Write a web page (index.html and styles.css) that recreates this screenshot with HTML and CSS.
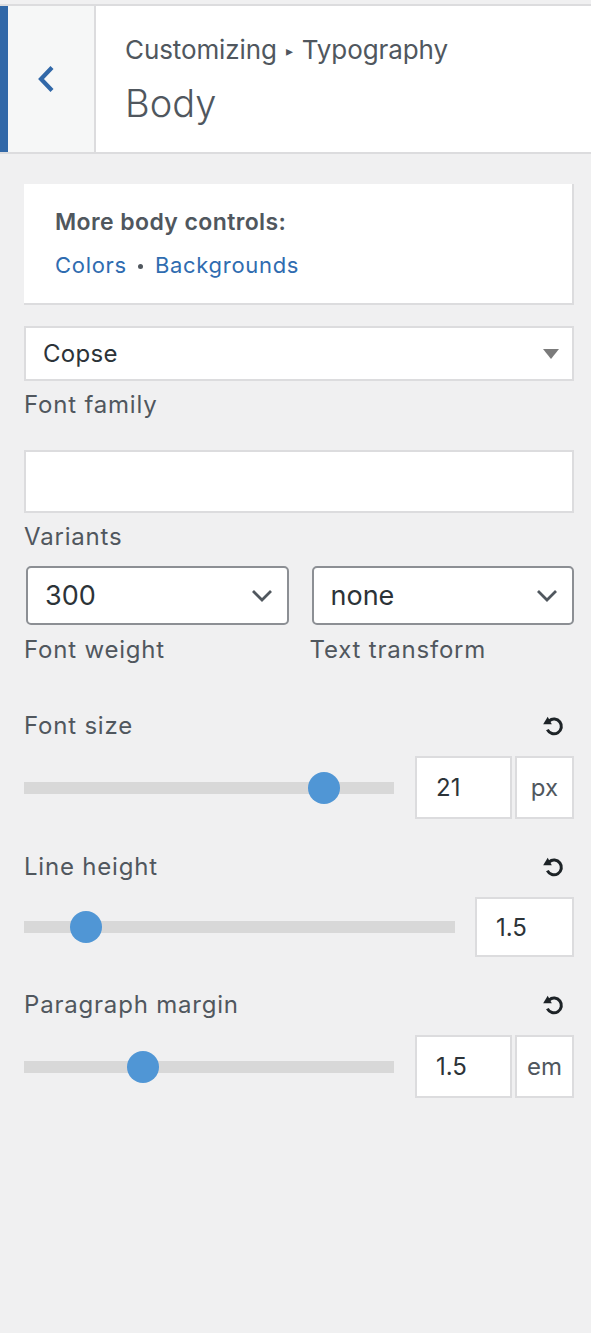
FILE: index.html
```html
<!DOCTYPE html>
<html lang="en">
<head>
<meta charset="utf-8">
<title>Customizing Typography – Body</title>
<link rel="stylesheet" href="styles.css">
</head>
<body>
<header class="hdr">
  <div class="back">
    <svg class="back-icon" width="20" height="28" viewBox="0 0 20 28"><path d="M16 2.5 L5 14 L16 25.5" fill="none" stroke="#3168a8" stroke-width="4.2"/></svg>
  </div>
  <div class="title">
    <div class="crumb">Customizing<span class="sep">▸</span>Typography</div>
    <h1 class="name">Body</h1>
  </div>
</header>

<main class="panel">
  <section class="card">
    <p class="card-title">More body controls:</p>
    <p class="card-links"><a href="#">Colors</a><span class="dot"></span><a href="#">Backgrounds</a></p>
  </section>

  <div class="sel-wide">
    <span>Copse</span>
    <svg width="16" height="10" viewBox="0 0 16 10"><path d="M0 0 H16 L8 10 Z" fill="#7b7b7b"/></svg>
  </div>
  <span class="lbl">Font family</span>

  <div class="text-input"></div>
  <span class="lbl">Variants</span>

  <div class="pair">
    <div class="col">
      <div class="sel"><span>300</span><svg width="22" height="14" viewBox="0 0 22 14"><path d="M2 2 L11 11 L20 2" fill="none" stroke="#50575e" stroke-width="2.8"/></svg></div>
      <span class="lbl">Font weight</span>
    </div>
    <div class="col">
      <div class="sel"><span>none</span><svg width="22" height="14" viewBox="0 0 22 14"><path d="M2 2 L11 11 L20 2" fill="none" stroke="#50575e" stroke-width="2.8"/></svg></div>
      <span class="lbl">Text transform</span>
    </div>
  </div>

  <div class="slider-block first">
    <div class="head"><span>Font size</span>
      <svg class="reset" width="26" height="26" viewBox="0 0 24 24"><path d="M7.4 7.4 A6.8 6.8 0 1 1 5.9 15.4" fill="none" stroke="#1d2327" stroke-width="2.8"/><path d="M6.2 3.4 L2 10.4 L10 10.4 Z" fill="#1d2327"/></svg>
    </div>
    <div class="slider-row">
      <div class="track"><span class="thumb" style="left:81%"></span></div>
      <div class="num-group">
        <div class="num">21</div>
        <div class="unit">px</div>
      </div>
    </div>
  </div>

  <div class="slider-block">
    <div class="head"><span>Line height</span>
      <svg class="reset" width="26" height="26" viewBox="0 0 24 24"><path d="M7.4 7.4 A6.8 6.8 0 1 1 5.9 15.4" fill="none" stroke="#1d2327" stroke-width="2.8"/><path d="M6.2 3.4 L2 10.4 L10 10.4 Z" fill="#1d2327"/></svg>
    </div>
    <div class="slider-row narrow-gap">
      <div class="track"><span class="thumb" style="left:14.4%"></span></div>
      <div class="num solo">1.5</div>
    </div>
  </div>

  <div class="slider-block">
    <div class="head"><span>Paragraph margin</span>
      <svg class="reset" width="26" height="26" viewBox="0 0 24 24"><path d="M7.4 7.4 A6.8 6.8 0 1 1 5.9 15.4" fill="none" stroke="#1d2327" stroke-width="2.8"/><path d="M6.2 3.4 L2 10.4 L10 10.4 Z" fill="#1d2327"/></svg>
    </div>
    <div class="slider-row">
      <div class="track"><span class="thumb" style="left:32.2%"></span></div>
      <div class="num-group">
        <div class="num">1.5</div>
        <div class="unit">em</div>
      </div>
    </div>
  </div>
</main>
</body>
</html>
```

FILE: styles.css
```css
* { box-sizing: border-box; }

html, body {
  margin: 0;
  background: #f0f0f1;
}

body {
  font-family: Inter, "Noto Sans", sans-serif;
  color: #50575e;
  min-height: 1333px;
}

/* Header */
.hdr {
  display: flex;
  margin-top: 4px;
  height: 150px;
  border-top: 2px solid #dcdcde;
  border-bottom: 2px solid #dcdcde;
  background: #fff;
}

.back {
  width: 96px;
  flex: none;
  border-left: 8px solid #3168a8;
  border-right: 2px solid #dcdcde;
  background: #f6f7f7;
  display: flex;
  align-items: center;
  padding-left: 28px;
}

.back-icon { display: block; }

.title {
  padding: 28px 0 0 29px;
}

.crumb {
  font-size: 26px;
  line-height: 32px;
  color: #50575e;
  letter-spacing: -0.1px;
}

.sep {
  font-size: 14px;
  margin: 0 9px;
  vertical-align: 3px;
}

.name {
  margin: 12px 0 0;
  font-size: 38px;
  line-height: 48px;
  font-weight: 300;
  color: #50575e;
}

/* Panel */
.panel {
  padding: 30px 17px 0 24px;
}

.card {
  background: #fff;
  border-right: 2px solid #dcdcde;
  border-bottom: 2px solid #dcdcde;
  padding: 23px 31px 23px;
}

.card-title {
  margin: 0;
  font-size: 23px;
  line-height: 30px;
  font-weight: 600;
  letter-spacing: 0.4px;
  color: #50575e;
}

.card-links {
  margin: 13px 0 0;
  font-size: 22px;
  line-height: 30px;
  letter-spacing: 0.7px;
  display: flex;
  align-items: center;
}

.card-links a {
  color: #2f6cb0;
  text-decoration: none;
}

.dot {
  width: 5px;
  height: 5px;
  border-radius: 50%;
  background: #50575e;
  margin: 2px 12px 0 11px;
}

.sel-wide {
  margin-top: 21px;
  height: 55px;
  border: 2px solid #dcdcde;
  background: #fff;
  display: flex;
  align-items: center;
  justify-content: space-between;
  padding: 0 13px 0 17px;
  font-size: 24px;
  letter-spacing: 0.3px;
  color: #2c3338;
}

.lbl {
  display: block;
  margin-top: 8px;
  font-size: 24px;
  line-height: 32px;
  letter-spacing: 0.8px;
  color: #50575e;
}

.text-input {
  margin-top: 29px;
  height: 63px;
  border: 2px solid #dcdcde;
  background: #fff;
}

.pair {
  display: grid;
  grid-template-columns: 1fr 1fr;
  column-gap: 21px;
  margin-top: 13px;
}

.sel {
  margin-left: 2px;
  height: 59px;
  border: 2px solid #8c8f94;
  border-radius: 5px;
  background: #fff;
  display: flex;
  align-items: center;
  justify-content: space-between;
  padding: 0 14px 0 17px;
  font-size: 27px;
  color: #2c3338;
}

.sel svg { display: block; }

.pair .lbl { margin-top: 9px; }

/* Sliders */
.slider-block { margin-top: 32px; }
.slider-block.first { margin-top: 44px; }

.head {
  display: flex;
  justify-content: space-between;
  align-items: center;
  height: 32px;
  font-size: 24px;
  line-height: 32px;
  letter-spacing: 0.8px;
  color: #50575e;
}

.reset {
  display: block;
  margin-right: 7px;
}

.slider-row {
  display: flex;
  align-items: center;
  gap: 21px;
  margin-top: 14px;
}

.slider-row.narrow-gap { gap: 20px; }

.track {
  flex: 1;
  height: 12px;
  background: #d8d8d8;
  position: relative;
}

.thumb {
  position: absolute;
  top: 50%;
  width: 32px;
  height: 32px;
  border-radius: 50%;
  background: #5096d5;
  transform: translate(-50%, -50%);
}

.num-group {
  display: flex;
  gap: 3px;
}

.num {
  width: 97px;
  height: 63px;
  border: 2px solid #dcdcde;
  background: #fff;
  display: flex;
  align-items: center;
  padding-left: 19px;
  font-size: 24px;
  color: #2c3338;
}

.num.solo {
  width: 99px;
  height: 60px;
}

.unit {
  width: 59px;
  height: 63px;
  border: 2px solid #dcdcde;
  background: #fff;
  display: flex;
  align-items: center;
  justify-content: center;
  font-size: 24px;
  color: #50575e;
}
```
